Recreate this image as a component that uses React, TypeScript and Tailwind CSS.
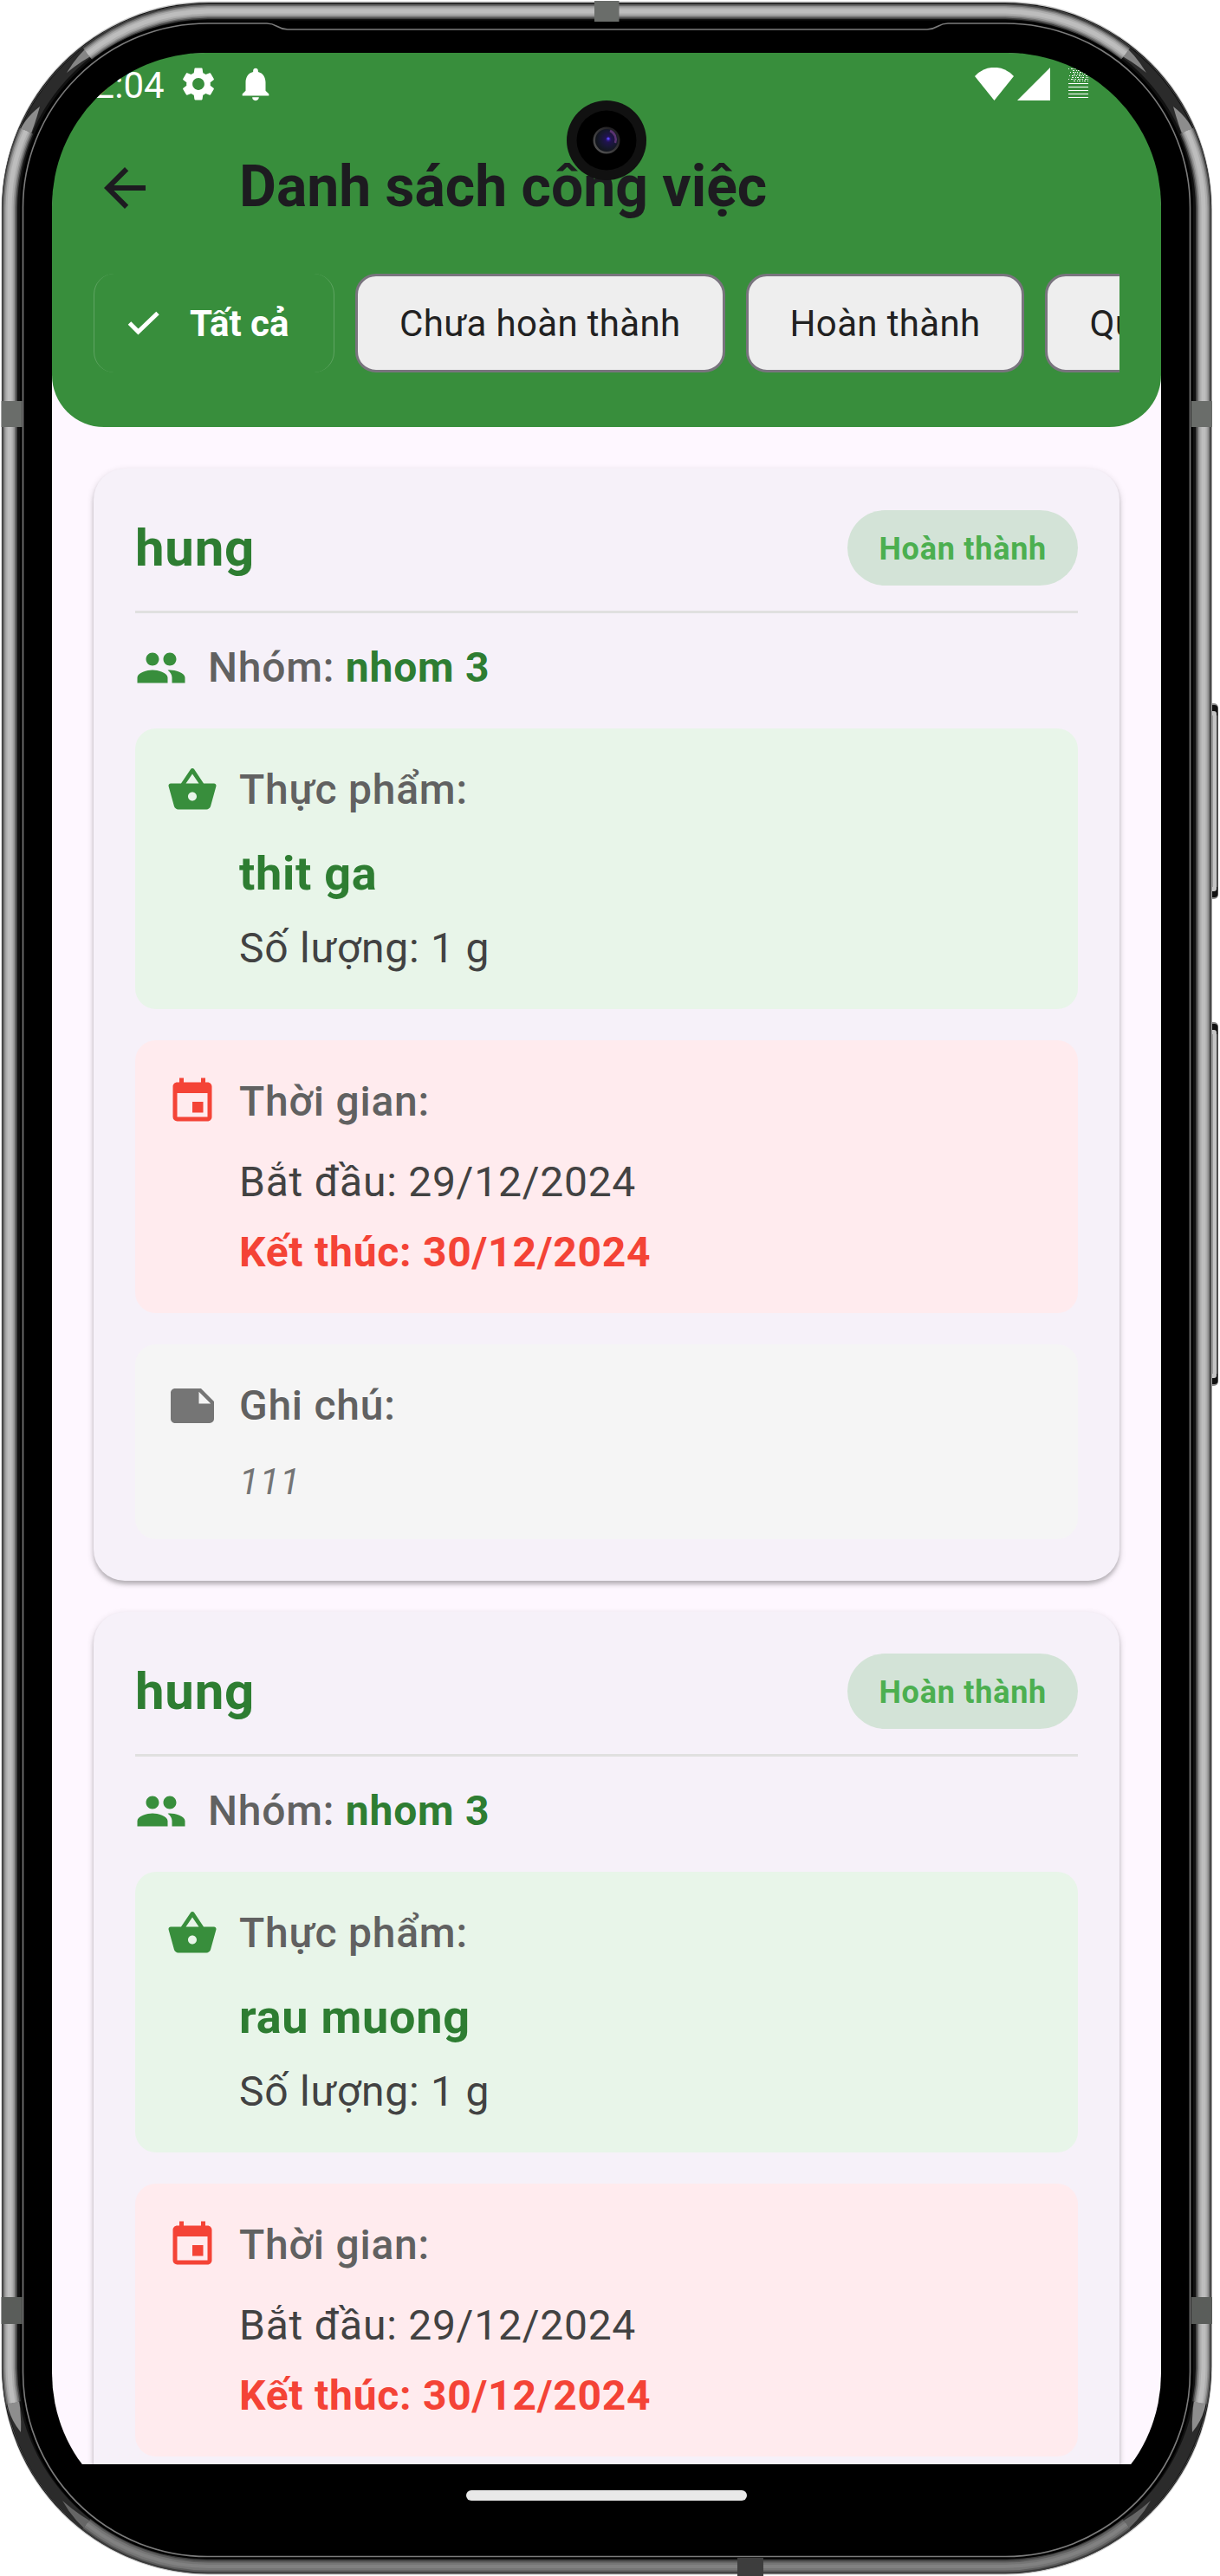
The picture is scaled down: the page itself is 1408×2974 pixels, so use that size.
import type { ReactNode } from "react";
import {
  MdArrowBack,
  MdEvent,
  MdNote,
  MdNotifications,
  MdPeople,
  MdSettings,
  MdShoppingBasket,
} from "react-icons/md";

type Task = { name: string; group: string; food: string };

const TASKS: Task[] = [
  { name: "hung", group: "nhom 3", food: "thit ga" },
  { name: "hung", group: "nhom 3", food: "rau muong" },
];

const BRIGHT: [number, string][] = [
  [18, "#3f3f3f"],
  [15, "#6e6e6e"],
  [12, "#929292"],
  [9, "#adadad"],
  [5, "#bdbdbd"],
];
const DIM: [number, string][] = [
  [17, "#3a3a3a"],
  [13, "#5c5c5c"],
  [9, "#757575"],
  [4, "#818181"],
];

const TOP_EDGE = "M101 62 A227 227 0 0 1 240 13 H1160 A227 227 0 0 1 1299 62";
const LEFT_EDGE = "M30 151 A228 228 0 0 0 11 240 V2734 A228 228 0 0 0 15 2774";
const RIGHT_EDGE = "M1370 151 A228 228 0 0 1 1389 240 V2734 A228 228 0 0 1 1385 2774";
const BOTTOM_EDGE = "M100 2914 A228 228 0 0 0 240 2963 H1160 A228 228 0 0 0 1300 2914";

/* Tapering ends of the metal reflections on one side of the body. */
function ReflectionTips() {
  return (
    <g>
      <path d="M77 84 Q90 62 109 47 L117 58 Q94 70 77 84 Z" fill="#858585" />
      <path d="M46 123 Q26 138 18 162 L32 164 Q40 145 46 123 Z" fill="#8d8d8d" />
      <path d="M24 2808 Q9 2790 7 2766 L21 2765 Q25 2786 24 2808 Z" fill="#8d8d8d" />
      <path d="M72 2887 Q86 2912 109 2929 L116 2917 Q92 2905 72 2887 Z" fill="#666666" />
    </g>
  );
}

function SideButton({ y, h }: { y: number; h: number }) {
  return (
    <g>
      <rect x={1394} y={y} width={12} height={h} rx={5} fill="#8a8a8a" />
      <rect x={1394} y={y + 2} width={11.5} height={h - 4} rx={4} fill="#111111" />
      <rect x={1403} y={y + 14} width={3} height={h - 28} fill="#4e4e4e" />
      <rect x={1394} y={y + 9} width={10} height={h - 18} rx={3} fill="#c4c4c4" />
      <rect x={1394} y={y + 14} width={5.5} height={h - 28} fill="#6e6e6e" />
    </g>
  );
}

function PhoneFrame() {
  return (
    <svg className="absolute inset-0" width={1408} height={2974} viewBox="0 0 1408 2974" fill="none">
      <SideButton y={812} h={226} />
      <SideButton y={1180} h={420} />
      <rect x={1.5} y={1.5} width={1397.5} height={2971} rx={240} fill="#c9c9c9" />
      <rect x={2.2} y={3} width={1396} height={2968} rx={239} fill="#111111" />
      <rect x={3.5} y={4.5} width={1393.5} height={2965} rx={237} stroke="#4d4d4d" strokeWidth={1} />
      <rect x={12} y={13} width={1376} height={2949} rx={228} stroke="#2b2b2b" strokeWidth={14} />
      <ReflectionTips />
      <g transform="matrix(-1 0 0 1 1400 0)">
        <ReflectionTips />
      </g>
      {[TOP_EDGE, LEFT_EDGE, RIGHT_EDGE].map((d) =>
        BRIGHT.map(([w, c]) => <path key={d + w} d={d} stroke={c} strokeWidth={w} />)
      )}
      {DIM.map(([w, c]) => (
        <path key={w} d={BOTTOM_EDGE} stroke={c} strokeWidth={w} />
      ))}
      <rect x={23} y={23.5} width={1354} height={2931} rx={215} fill="#000000" />
      <path
        d="M26.5 240 A213 213 0 0 1 240 27 H308 C320 27 320 34 332 34 H1070 C1082 34 1082 27 1094 27 H1160 A213 213 0 0 1 1373.5 240 V2738 A213 213 0 0 1 1160 2951.5 H240 A213 213 0 0 1 26.5 2738 Z"
        stroke="#7c7c7c"
        strokeWidth={1.6}
      />
      <g fill="#6a6d6a">
        <rect x={1.5} y={463} width={24} height={30} />
        <rect x={1375} y={463} width={24} height={30} />
        <rect x={686} y={1} width={28.5} height={24} />
      </g>
      <g fill="#5a5d5a">
        <rect x={1.5} y={2652} width={24} height={31} />
        <rect x={1375} y={2652} width={24} height={31} />
      </g>
      <rect x={851} y={2953} width={30} height={21} fill="#3d3d3d" />
    </svg>
  );
}

function FrontCamera() {
  return (
    <svg className="absolute left-[654px] top-[116px]" width={92} height={92} viewBox="-46 -46 92 92">
      <defs>
        <radialGradient id="lens" cx="0.58" cy="0.45" r="0.55">
          <stop offset="0" stopColor="#3c25b0" />
          <stop offset="0.25" stopColor="#20134f" />
          <stop offset="0.7" stopColor="#16182e" />
          <stop offset="1" stopColor="#12151c" />
        </radialGradient>
        <linearGradient id="rim" x1="0" y1="1" x2="1" y2="0">
          <stop offset="0" stopColor="#5a5a5a" />
          <stop offset="1" stopColor="#141216" />
        </linearGradient>
      </defs>
      <circle r={46} fill="#111111" />
      <circle r={34.5} fill="#000000" />
      <circle r={15.5} fill="url(#rim)" />
      <circle r={13} fill="url(#lens)" />
      <path d="M4 -11 A11 11 0 0 1 10 3" fill="none" stroke="#5a3372" strokeWidth={2.5} />
      <circle cx={2} cy={-2} r={1.6} fill="#5b46ff" />
    </svg>
  );
}

function StatusBar() {
  return (
    <div className="flex h-[72px] items-center pl-[25px] pr-[84px] text-white">
      <span className="w-[121px] pt-[4px] text-[42px] leading-none">12:04</span>
      <MdSettings size={46} />
      <MdNotifications size={46} className="ml-[20px]" />
      <svg className="ml-auto" width={45} height={38} viewBox="0 0 45 38" fill="currentColor">
        <path d="M0 10 A30 30 0 0 1 45 10 L22.5 38 Z" />
      </svg>
      <svg className="ml-[4px]" width={38} height={38} viewBox="0 0 38 38" fill="currentColor">
        <path d="M38 0 V38 H0 Z" />
      </svg>
      <svg className="ml-[21px]" width={23} height={38} viewBox="0 0 23 38" stroke="currentColor">
        <path d="M0 1.5 H23 M2 5.5 H23 M1 9.5 H23 M0 13.5 H23" strokeDasharray="1 2 2 1 1 1" />
        <path d="M5 3.5 H23 M6 7.5 H23 M4 11.5 H23 M6 15.5 H23" strokeDasharray="2 2 1 1" />
        <path d="M0 18.5 H23 M0 22.5 H23 M0 26.5 H23 M0 30.5 H23 M0 34.5 H23" />
      </svg>
    </div>
  );
}

function Chip({ children }: { children: ReactNode }) {
  return (
    <div className="flex h-[114px] shrink-0 items-center rounded-[24px] border-3 border-[#79747e] bg-[#eeeeee] px-12 pt-[2px] text-[42px] leading-none tracking-[0.35px] whitespace-nowrap text-[#212121]">
      {children}
    </div>
  );
}

function Header() {
  return (
    <header className="h-[432px] rounded-b-[60px] bg-[#388e3c]">
      <StatusBar />
      <div className="flex h-[168px] items-center gap-24 pl-12 text-[#1d1b20]">
        <MdArrowBack size={72} />
        <h1 className="pb-[3px] text-[66px] leading-none font-bold">Danh sách công việc</h1>
      </div>
      <div className="mx-12 mt-[15px] flex gap-6 overflow-hidden">
        <div className="flex h-[114px] w-[278px] shrink-0 items-center rounded-[24px] border-x border-white/20 pl-[38px] text-white">
          <svg width={38} height={30} viewBox="0 0 38 30" fill="none" stroke="currentColor" strokeWidth={5}>
            <path d="M2.5 15 L12.5 25 L35 3.5" />
          </svg>
          <span className="pt-[2px] pl-[34px] text-[42px] leading-none font-bold whitespace-nowrap">Tất cả</span>
        </div>
        <Chip>Chưa hoàn thành</Chip>
        <Chip>Hoàn thành</Chip>
        <Chip>Quá hạn</Chip>
      </div>
    </header>
  );
}

function Section({
  tone,
  icon,
  label,
  children,
}: {
  tone: string;
  icon: ReactNode;
  label: string;
  children: ReactNode;
}) {
  return (
    <section className={`flex flex-col rounded-[24px] p-9 ${tone}`}>
      <div className="flex h-[69px] items-center gap-6">
        {icon}
        <span className="text-[48px] leading-none font-medium text-[#616161]">{label}</span>
      </div>
      <div className="flex flex-col gap-3 pt-6 pl-[84px]">{children}</div>
    </section>
  );
}

function TaskCard({ task }: { task: Task }) {
  return (
    <article className="flex h-[1284px] shrink-0 flex-col rounded-[36px] bg-[#f6f1f9] p-12 tracking-[0.75px] shadow-[0_3px_9px_rgba(0,0,0,0.16),0_4px_4px_rgba(0,0,0,0.18)]">
      <div className="flex h-[87px] items-center justify-between">
        <h2 className="text-[60px] leading-none font-bold text-[#2e7d32]">{task.name}</h2>
        <span className="flex h-[87px] items-center rounded-full bg-[#4caf50]/20 px-9 pt-[2px] text-[36px] leading-none font-bold text-[#4caf50]">
          Hoàn thành
        </span>
      </div>
      <div className="flex h-[60px] flex-col justify-center">
        <div className="h-[3px] bg-[#e0e0e0]" />
      </div>
      <div className="mb-9 flex h-[69px] items-center gap-6 text-[48px] leading-none">
        <MdPeople size={60} className="text-[#388e3c]" />
        <p className="font-medium text-[#616161]">
          Nhóm: <span className="font-bold text-[#2e7d32]">{task.group}</span>
        </p>
      </div>
      <div className="flex flex-col gap-9">
        <Section
          tone="bg-[#e8f5e9]"
          icon={<MdShoppingBasket size={60} className="text-[#388e3c]" />}
          label="Thực phẩm:"
        >
          <p className="text-[54px] leading-[78px] font-bold text-[#2e7d32]">{task.food}</p>
          <p className="text-[48px] leading-[69px] text-[#424242]">Số lượng: 1 g</p>
        </Section>
        <Section
          tone="bg-[#ffebee]"
          icon={<MdEvent size={60} className="text-[#f44336]" />}
          label="Thời gian:"
        >
          <p className="text-[48px] leading-[69px] text-[#424242]">Bắt đầu: 29/12/2024</p>
          <p className="text-[48px] leading-[69px] font-bold text-[#f44336]">Kết thúc: 30/12/2024</p>
        </Section>
        <Section
          tone="bg-[#f5f5f5]"
          icon={<MdNote size={60} className="text-[#757575]" />}
          label="Ghi chú:"
        >
          <p className="text-[42px] leading-[60px] text-[#757575] italic">111</p>
        </Section>
      </div>
    </article>
  );
}

export default function App() {
  return (
    <div className="relative h-[2974px] w-[1408px] overflow-hidden bg-white pt-[61px] pl-[60px] font-[Roboto,'Noto_Sans',sans-serif]">
      <PhoneFrame />
      <div className="relative flex h-[2856px] w-[1280px] flex-col overflow-hidden rounded-[177px] bg-black">
        <div className="shrink-0 rounded-t-[182px] bg-[#fef7ff]">
          <Header />
        </div>
        <main className="flex min-h-0 flex-1 flex-col gap-9 overflow-hidden bg-[#fef7ff] px-12 pt-[48px]">
          {TASKS.map((task) => (
            <TaskCard key={task.food} task={task} />
          ))}
        </main>
        <nav className="flex h-[72px] shrink-0 items-center justify-center bg-black">
          <div className="mb-[1px] h-[12px] w-[324px] rounded-full bg-[#e9e9e9]" />
        </nav>
      </div>
      <FrontCamera />
    </div>
  );
}
